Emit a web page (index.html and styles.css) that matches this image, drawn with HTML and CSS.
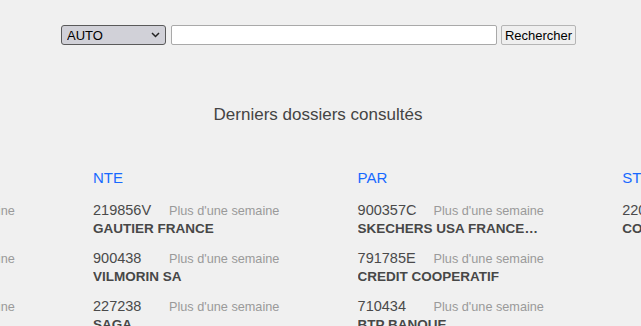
FILE: index.html
```html
<!DOCTYPE html>
<html lang="fr">
<head>
<meta charset="utf-8">
<title>Recherche</title>
<link rel="stylesheet" href="styles.css">
</head>
<body>
<div class="page">
  <form class="search">
    <div class="select-wrap">
      <select class="mode"><option>AUTO</option></select>
      <svg class="chev" width="9" height="6" viewBox="0 0 9 6"><path d="M1 1 L4.5 4.5 L8 1" fill="none" stroke="#222" stroke-width="1.5"/></svg>
    </div>
    <input class="query" type="text">
    <button class="btn" type="button">Rechercher</button>
  </form>

  <h2 class="title">Derniers dossiers consultés</h2>

  <div class="carousel">
    <div class="track">
      <section class="col">
        <h3 class="agency">LYO</h3>
        <div class="item"><div class="line"><span class="num">204512A</span><span class="when">Plus d'une semaine</span></div><div class="name">BOIRON SA</div></div>
        <div class="item"><div class="line"><span class="num">318877</span><span class="when">Plus d'une semaine</span></div><div class="name">SEB DEVELOPPEMENT</div></div>
        <div class="item"><div class="line"><span class="num">402219</span><span class="when">Plus d'une semaine</span></div><div class="name">GERFLOR</div></div>
      </section>
      <section class="col">
        <h3 class="agency">NTE</h3>
        <div class="item"><div class="line"><span class="num">219856V</span><span class="when">Plus d'une semaine</span></div><div class="name">GAUTIER FRANCE</div></div>
        <div class="item"><div class="line"><span class="num">900438</span><span class="when">Plus d'une semaine</span></div><div class="name">VILMORIN SA</div></div>
        <div class="item"><div class="line"><span class="num">227238</span><span class="when">Plus d'une semaine</span></div><div class="name">SAGA</div></div>
      </section>
      <section class="col">
        <h3 class="agency">PAR</h3>
        <div class="item"><div class="line"><span class="num">900357C</span><span class="when">Plus d'une semaine</span></div><div class="name">SKECHERS USA FRANCE SAS</div></div>
        <div class="item"><div class="line"><span class="num">791785E</span><span class="when">Plus d'une semaine</span></div><div class="name">CREDIT COOPERATIF</div></div>
        <div class="item"><div class="line"><span class="num">710434</span><span class="when">Plus d'une semaine</span></div><div class="name">BTP BANQUE</div></div>
      </section>
      <section class="col">
        <h3 class="agency">STR</h3>
        <div class="item"><div class="line"><span class="num">220145B</span><span class="when">Plus d'une semaine</span></div><div class="name">COFIDIS</div></div>
      </section>
    </div>
  </div>
</div>
</body>
</html>
```

FILE: styles.css
```css
html, body {
  margin: 0;
  padding: 0;
  background: #f0f0f0;
  font-family: "Liberation Sans", Arial, sans-serif;
}
.page {
  width: 641px;
  height: 326px;
  overflow: hidden;
}
.search {
  display: flex;
  justify-content: center;
  align-items: center;
  padding: 25px 4px 0 0;
  margin: 0;
  height: 20px;
}
.select-wrap {
  position: relative;
  width: 105px;
  height: 20px;
  margin-right: 5px;
}
.mode {
  appearance: none;
  -webkit-appearance: none;
  width: 105px;
  height: 20px;
  box-sizing: border-box;
  background: #d1d1d8;
  border: 1px solid #5a5a5a;
  border-radius: 3px;
  font-family: "Liberation Sans", Arial, sans-serif;
  font-size: 13px;
  color: #000;
  padding: 0 0 0 5px;
  margin: 0;
}
.chev {
  position: absolute;
  right: 6px;
  top: 7px;
  pointer-events: none;
}
.query {
  width: 326px;
  height: 20px;
  box-sizing: border-box;
  border: 1px solid #a9a9a9;
  border-radius: 2px;
  background: #fff;
  margin: 0 4px 0 0;
  padding: 0 3px;
}
.btn {
  width: 75px;
  height: 20px;
  box-sizing: border-box;
  border: 1px solid #b5b5b5;
  border-radius: 2px;
  background: #efefef;
  font-family: "Liberation Sans", Arial, sans-serif;
  font-size: 13px;
  color: #000;
  padding: 0;
  margin: 0;
}
.title {
  margin: 60px 0 0;
  text-align: center;
  font-weight: normal;
  font-size: 17px;
  line-height: 20px;
  color: #444;
  padding-right: 5px;
}
.carousel {
  overflow: hidden;
  margin-top: 45px;
}
.track {
  display: flex;
  margin-left: -171.6px;
}
.col {
  flex: 0 0 264.6px;
  width: 264.6px;
}
.agency {
  margin: 0 0 15px;
  font-weight: normal;
  font-size: 15px;
  line-height: 16px;
  color: #1769ff;
}
.item {
  margin-bottom: 12px;
}
.line {
  display: flex;
  align-items: baseline;
  height: 18px;
  line-height: 18px;
}
.num {
  width: 76px;
  font-size: 14.5px;
  color: #4a4a4a;
}
.when {
  font-size: 12.7px;
  color: #9a9a9a;
}
.name {
  width: 182px;
  height: 18px;
  line-height: 19px;
  font-size: 13.5px;
  font-weight: bold;
  color: #474747;
  white-space: nowrap;
  overflow: hidden;
  text-overflow: ellipsis;
}
```
